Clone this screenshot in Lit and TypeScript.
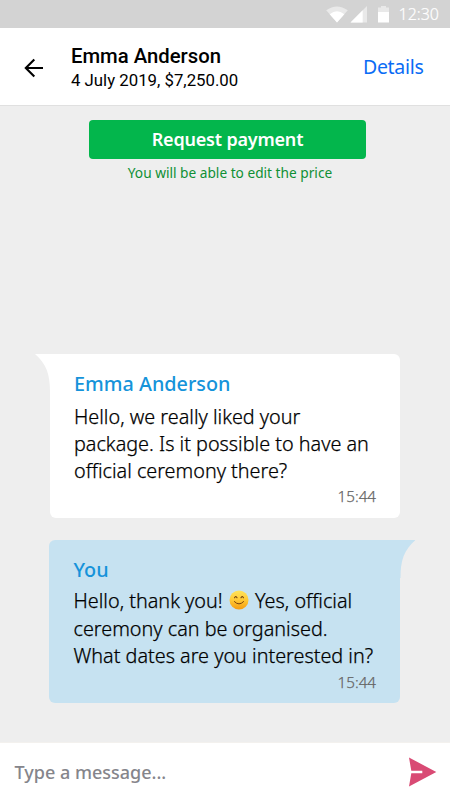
import { LitElement, html, css, svg } from "lit";
import { customElement, property } from "lit/decorators.js";

const smile = html`<svg class="emoji" viewBox="0 0 20 20" role="img" aria-label="smiling face">
  <defs>
    <linearGradient id="face" x1="0" y1="0" x2="0" y2="1">
      <stop offset="0" stop-color="#ffe45c" />
      <stop offset="0.5" stop-color="#ffc935" />
      <stop offset="1" stop-color="#f59c10" />
    </linearGradient>
  </defs>
  <circle cx="10" cy="10" r="9.5" fill="url(#face)" />
  <path d="M5.6 7.8Q6.8 5.2 8 7.8M12 7.8Q13.2 5.2 14.4 7.8" fill="none" stroke="#6b3a0c" stroke-width="1.1" stroke-linecap="round" />
  <path d="M5.4 11.6Q10 16.4 14.6 11.6" fill="none" stroke="#7a430c" stroke-width="1" stroke-linecap="round" />
</svg>`;

@customElement("chat-bubble")
export class ChatBubble extends LitElement {
  @property() author = "";
  @property() time = "";
  @property({ type: Boolean, reflect: true }) own = false;

  static styles = css`
    :host {
      display: flex;
      flex-direction: column;
      position: relative;
      box-sizing: border-box;
      width: 350px;
      height: 164px;
      padding: 16px 24px 0 24px;
      border-radius: 0 6px 6px 6px;
      background: #fff;
      color: #000;
    }
    :host([own]) {
      width: 351px;
      height: 163px;
      padding-left: 24.5px;
      border-radius: 6px 0 6px 6px;
      background: #c6e2f1;
    }
    .tail {
      position: absolute;
      top: 0;
      left: -15px;
      width: 15.5px;
      height: 38px;
      fill: #fff;
    }
    :host([own]) .tail {
      left: auto;
      right: -15px;
      transform: scaleX(-1);
      fill: #c6e2f1;
    }
    .author {
      font-size: 19.8px;
      font-weight: 500;
      line-height: 28px;
      color: #1593da;
    }
    .body {
      flex: none;
      height: 83px;
      padding-top: 5px;
      font-size: 19.8px;
      font-weight: 300;
      font-variant-ligatures: none;
      -webkit-text-stroke: 0.25px #000;
      line-height: 27px;
      white-space: nowrap;
    }
    :host([own]) .body {
      padding-top: 3.5px;
      height: 84.5px;
      line-height: 27.5px;
    }
    .time {
      align-self: flex-end;
      font-size: 15.2px;
      font-weight: 300;
      -webkit-text-stroke: 0.25px #666;
      line-height: 20px;
      color: #666;
    }
  `;

  render() {
    return html`
      <svg class="tail" viewBox="0 0 15.5 38" preserveAspectRatio="none">
        <path d="M0 0H15.5V38H15C15 20 11.5 10 0 0Z" />
      </svg>
      <div class="author">${this.author}</div>
      <div class="body"><slot></slot></div>
      <div class="time">${this.time}</div>
    `;
  }
}

@customElement("app-root")
export class AppRoot extends LitElement {
  static styles = css`
    :host {
      display: flex;
      flex-direction: column;
      width: 450px;
      height: 800px;
      overflow: hidden;
      background: #eee;
      font-family: "Noto Sans", "Open Sans", sans-serif;
    }
    .status {
      flex: none;
      display: flex;
      align-items: center;
      justify-content: flex-end;
      height: 28px;
      padding-right: 11px;
      box-sizing: border-box;
      background: #d3d3d3;
      color: #fff;
      font-size: 16px;
      font-weight: 300;
      -webkit-text-stroke: 0.2px #fff;
    }
    .status svg {
      width: 64px;
      height: 28px;
      margin-right: 9px;
    }
    .header {
      flex: none;
      display: flex;
      align-items: center;
      height: 78px;
      box-sizing: border-box;
      padding: 0 26.5px 0 24px;
      border-bottom: 1px solid #e0e0e0;
      background: #fff;
    }
    .back {
      width: 20px;
      height: 20px;
      margin: 2px 27px 0 0;
    }
    .who {
      flex: 1;
      font-family: Roboto, sans-serif;
      color: #000;
    }
    .name {
      font-size: 20.3px;
      font-weight: 500;
      line-height: 26px;
    }
    .meta {
      font-size: 16.8px;
      line-height: 22px;
    }
    .details {
      font-size: 19.5px;
      letter-spacing: -0.3px;
      color: #0a6cf5;
    }
    .chat {
      flex: 1;
      display: flex;
      flex-direction: column;
      align-items: center;
      padding-top: 14px;
    }
    .request {
      width: 277px;
      height: 39px;
      margin-left: 5px;
      border: 0;
      border-radius: 4px;
      padding: 0;
      background: #03b64c;
      color: #fff;
      font: 600 18px/39px "Noto Sans", sans-serif;
      letter-spacing: -0.2px;
    }
    .hint {
      margin: 3.5px 0 0 10px;
      font-size: 13.7px;
      line-height: 20px;
      color: #0f9035;
    }
    .messages {
      display: flex;
      flex-direction: column;
      align-items: flex-end;
      gap: 21.5px;
      margin: auto 1px 39.5px 0;
    }
    .emoji {
      width: 20px;
      height: 20px;
      margin: 0 1px 0 1px;
      vertical-align: -2px;
    }
    .composer {
      flex: none;
      display: flex;
      align-items: center;
      justify-content: space-between;
      height: 58px;
      box-sizing: border-box;
      padding: 0 13px 0 14.5px;
      border-top: 1px solid #f3f1ee;
      background: #fff;
      color: #85858b;
      font-size: 18px;
      font-weight: 500;
    }
    .send {
      width: 28px;
      height: 30px;
      fill: #d94a74;
    }
  `;

  private statusIcons() {
    return svg`
      <g fill="#fff">
        <path opacity=".5" d="M326.2 10.2Q336.8 2.6 347.8 10.2L337 22.5Z" />
        <path d="M329.7 14.2Q337 8.4 344.3 14.2L337 22.5Z" />
        <path opacity=".5" d="M367 6V22.5H350.5Z" />
        <path d="M362.7 10.3V22.5H350.5Z" />
        <path opacity=".5" d="M378 7.5H381V6H386V7.5H389V12H378Z" />
        <path d="M378 12H389V22.5H378Z" />
      </g>`;
  }

  render() {
    return html`
      <div class="status">
        <svg viewBox="326 0 64 28">${this.statusIcons()}</svg>
        <span>12:30</span>
      </div>
      <header class="header">
        <svg class="back" viewBox="0 0 20 20" fill="none" stroke="#000" stroke-width="2.1">
          <path d="M19 10H2M10.3 1.5L1.8 10L10.3 18.5" />
        </svg>
        <div class="who">
          <div class="name">Emma Anderson</div>
          <div class="meta">4 July 2019, $7,250.00</div>
        </div>
        <span class="details">Details</span>
      </header>
      <main class="chat">
        <button class="request">Request payment</button>
        <div class="hint">You will be able to edit the price</div>
        <div class="messages">
          <chat-bubble author="Emma Anderson" time="15:44"
            >Hello, we really liked your<br />package. Is it possible to have an<br />official ceremony there?</chat-bubble>
          <chat-bubble own author="You" time="15:44"
            >Hello, thank you! ${smile} Yes, official<br />ceremony can be organised.<br />What dates are you interested in?</chat-bubble>
        </div>
      </main>
      <footer class="composer">
        <span>Type a message...</span>
        <svg class="send" viewBox="0 0 28 30">
          <path d="M0 .5L27.3 15L0 29.5L2.3 16.3H13.3V13.8H2.3Z" />
        </svg>
      </footer>
    `;
  }
}
